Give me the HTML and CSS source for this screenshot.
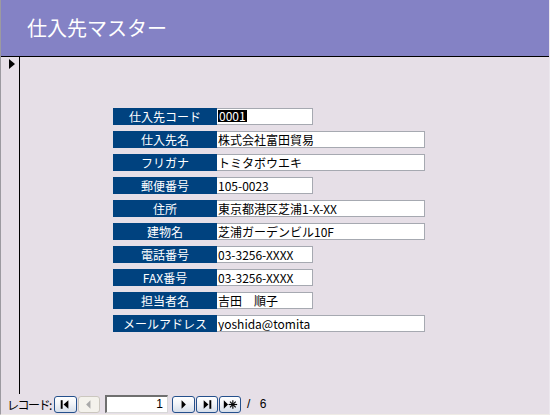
FILE: index.html
```html
<!DOCTYPE html>
<html lang="ja">
<head>
<meta charset="utf-8">
<title>仕入先マスター</title>
<link rel="stylesheet" href="styles.css">
</head>
<body>
<div class="window">
  <header class="header">
    <h1 class="title">仕入先マスター</h1>
  </header>
  <div class="main">
    <div class="selector"><span class="current"></span></div>
    <div class="form">
      <div class="row"><div class="label">仕入先コード</div><div class="field short"><span class="sel">0001</span></div></div>
      <div class="row"><div class="label">仕入先名</div><div class="field long">株式会社富田貿易</div></div>
      <div class="row"><div class="label">フリガナ</div><div class="field long">トミタボウエキ</div></div>
      <div class="row"><div class="label">郵便番号</div><div class="field short">105-0023</div></div>
      <div class="row"><div class="label">住所</div><div class="field long">東京都港区芝浦1-X-XX</div></div>
      <div class="row"><div class="label">建物名</div><div class="field long">芝浦ガーデンビル10F</div></div>
      <div class="row"><div class="label">電話番号</div><div class="field short">03-3256-XXXX</div></div>
      <div class="row"><div class="label">FAX番号</div><div class="field short">03-3256-XXXX</div></div>
      <div class="row"><div class="label">担当者名</div><div class="field short">吉田　順子</div></div>
      <div class="row"><div class="label">メールアドレス</div><div class="field long">yoshida@tomita</div></div>
    </div>
  </div>
  <div class="nav">
    <span class="nav-label">レコード:</span>
    <span class="btn first"><svg width="22" height="15" viewBox="0 0 22 15"><rect x="6" y="3" width="2" height="9" fill="#000"/><polygon points="14,3 14,12 9,7.5" fill="#000"/></svg></span>
    <span class="btn disabled prev"><svg width="21" height="15" viewBox="0 0 21 15"><polygon points="12,3 12,12 7.5,7.5" fill="#a9a9a9"/></svg></span>
    <span class="counter">1</span>
    <span class="btn next"><svg width="22" height="15" viewBox="0 0 22 15"><polygon points="9,3 9,12 13.5,7.5" fill="#000"/></svg></span>
    <span class="btn last"><svg width="21" height="15" viewBox="0 0 21 15"><polygon points="7,3 7,12 12,7.5" fill="#000"/><rect x="13" y="3" width="2" height="9" fill="#000"/></svg></span>
    <span class="btn new"><svg width="21" height="15" viewBox="0 0 21 15"><polygon points="4,3 4,12 8.5,7.5" fill="#000"/><g stroke="#000" stroke-width="1.2"><line x1="13.5" y1="3" x2="13.5" y2="12"/><line x1="9" y1="7.5" x2="18" y2="7.5"/><line x1="10.5" y1="4.5" x2="16.5" y2="10.5"/><line x1="16.5" y1="4.5" x2="10.5" y2="10.5"/></g></svg></span>
    <span class="total">/ 6</span>
  </div>
</div>
</body>
</html>
```
FILE: styles.css
```css
html, body {
  margin: 0;
  padding: 0;
  width: 550px;
  height: 415px;
  overflow: hidden;
  background: #e6dfe7;
  font-family: "Noto Sans CJK JP", "Noto Sans", sans-serif;
  font-size: 12px;
  color: #000;
}

.window {
  box-sizing: border-box;
  width: 550px;
  height: 415px;
  display: flex;
  flex-direction: column;
  border-left: 1px solid #9c9aa0;
  border-right: 1px solid #ece8ee;
  border-bottom: 1px solid #efebe6;
  background: #e6dfe7;
}

.header {
  height: 56px;
  flex: none;
  background: #8482c5;
  border-bottom: 1px solid #000;
  display: flex;
  align-items: center;
  padding-left: 26px;
}

.title {
  margin: 0;
  font-size: 20px;
  font-weight: normal;
  color: #fff;
  letter-spacing: 0;
  line-height: 24px;
}

.main {
  flex: 1;
  display: flex;
  min-height: 0;
}

.selector {
  width: 18px;
  flex: none;
  border-right: 1px solid #000;
  padding-top: 2px;
  box-sizing: content-box;
}

.current {
  display: block;
  width: 0;
  height: 0;
  margin-left: 8px;
  border-left: 6px solid #000;
  border-top: 5px solid transparent;
  border-bottom: 5px solid transparent;
}

.form {
  padding-top: 51px;
  padding-left: 93px;
  display: flex;
  flex-direction: column;
  gap: 6px;
}

.row {
  display: flex;
  height: 17px;
}

.label {
  width: 104px;
  height: 17px;
  background: #00427f;
  color: #fff;
  text-align: center;
  line-height: 17px;
  font-size: 12px;
  white-space: nowrap;
}

.field {
  box-sizing: border-box;
  height: 17px;
  background: #fff;
  border: 1px solid #a6a9b1;
  border-left: none;
  padding-left: 1px;
  line-height: 15px;
  white-space: nowrap;
  overflow: hidden;
}

.short { width: 96px; }
.long { width: 208px; }

.sel {
  background: #000;
  color: #fff;
  display: inline-block;
  line-height: 12px;
  padding: 0 1px;
  margin-top: 1px;
  vertical-align: top;
}

.nav {
  height: 20px;
  flex: none;
  display: flex;
  align-items: center;
  padding-left: 6px;
}

.nav-label {
  width: 47px;
  letter-spacing: -1.5px;
  white-space: nowrap;
  font-size: 12px;
}

.btn {
  box-sizing: border-box;
  width: 22px;
  height: 17px;
  display: flex;
  align-items: center;
  justify-content: center;
  border: 1px solid #24508c;
  border-radius: 3px;
  background: linear-gradient(#ffffff, #f2f4f8 45%, #d6deea);
  margin-left: 1px;
}

.btn svg { display: block; }

.btn.first { width: 23px; margin-left: 0; }
.btn.next { width: 23px; margin-left: 4px; }

.btn.disabled {
  border-color: #cbc7bf;
  background: #f4f2ec;
}

.counter {
  box-sizing: border-box;
  width: 63px;
  height: 18px;
  margin-left: 5px;
  background: #fff;
  border-top: 2px solid #6f6f6f;
  border-left: 2px solid #6f6f6f;
  border-right: 1px solid #d8d8d8;
  border-bottom: 1px solid #d8d8d8;
  text-align: right;
  padding-right: 4px;
  line-height: 15px;
  font-family: "Liberation Sans", sans-serif;
}

.total {
  margin-left: 6px;
  font-family: "Liberation Sans", sans-serif;
  font-size: 12px;
  letter-spacing: 3px;
}
```
